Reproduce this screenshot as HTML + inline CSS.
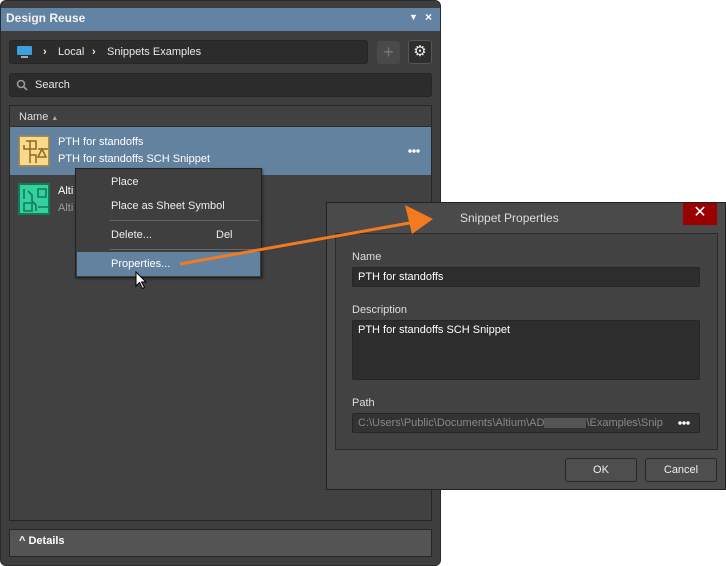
<!DOCTYPE html>
<html><head><style>
*{box-sizing:border-box;margin:0;padding:0}
body{width:726px;height:566px;background:#fff;position:relative;overflow:hidden;font-family:"Liberation Sans",sans-serif;font-size:11px;color:#e8e8e8}
.a{position:absolute}
.dots{position:absolute;width:12px;height:4px;background:radial-gradient(circle,#fff 1.5px,transparent 2px) 0 0/4px 4px repeat-x}
</style></head><body>
<div class="a" style="left:0;top:0;width:441px;height:566px;background:#3e3e3e;border-radius:6px;border:1px solid #2a2a2a"></div>
<div class="a" style="left:1px;top:8px;width:439px;height:23px;background:#6283a4"></div>
<div class="a" style="left:6px;top:11px;font-weight:bold;font-size:12px;color:#f2f2f2">Design Reuse</div>
<div class="a" style="left:409px;top:12px;font-size:9px;color:#fff">▼</div>
<div class="a" style="left:425px;top:10px;font-size:12px;font-weight:bold;color:#fff">×</div>
<div class="a" style="left:9px;top:40px;width:359px;height:24px;background:#2c2c2c;border:1px solid #262626;border-radius:3px"></div>
<div class="a" style="left:17px;top:46px;width:15px;height:9px;background:#3aa0e0;border-radius:1px"></div>
<div class="a" style="left:21px;top:56px;width:7px;height:2px;background:#aaa"></div>
<div class="a" style="left:43px;top:46px;font-weight:bold">›</div>
<div class="a" style="left:58px;top:46px">Local</div>
<div class="a" style="left:92px;top:46px;font-weight:bold">›</div>
<div class="a" style="left:107px;top:46px">Snippets Examples</div>
<div class="a" style="left:377px;top:41px;width:23px;height:23px;background:#4a4a4a;border-radius:3px;color:#777;font-size:18px;text-align:center;line-height:22px">+</div>
<div class="a" style="left:408px;top:40px;width:24px;height:24px;background:#2e2e2e;border:1px solid #555;border-radius:3px;color:#eee;font-size:15px;text-align:center;line-height:21px">⚙</div>
<div class="a" style="left:9px;top:73px;width:423px;height:24px;background:#2c2c2c;border:1px solid #262626;border-radius:3px"></div>
<svg class="a" style="left:16px;top:79px" width="12" height="12"><circle cx="5" cy="5" r="3.5" stroke="#999" stroke-width="1.6" fill="none"/><line x1="8" y1="8" x2="11" y2="11" stroke="#999" stroke-width="1.8"/></svg>
<div class="a" style="left:35px;top:79px">Search</div>
<div class="a" style="left:9px;top:105px;width:423px;height:416px;background:#414141;border:1px solid #262626"></div>
<div class="a" style="left:10px;top:126px;width:421px;height:1px;background:#2e2e2e"></div>
<div class="a" style="left:19px;top:111px;color:#ddd">Name <span style="font-size:7px;color:#aaa">▲</span></div>
<div class="a" style="left:10px;top:127px;width:421px;height:48px;background:#62829f"></div>
<svg class="a" style="left:18px;top:135px" width="32" height="32"><rect x="0.5" y="0.5" width="31" height="31" fill="#a88b47"/><rect x="2" y="2" width="28" height="28" fill="#fbd98a"/><path d="M8 6h10v8H6v-4M12 6v22M20 14h10M24 14l-4 8h8z M12 20h6v8" stroke="#8a6a22" stroke-width="1.5" fill="none"/></svg>
<div class="a" style="left:58px;top:136px;color:#fff">PTH for standoffs</div>
<div class="a" style="left:58px;top:153px;color:#fff">PTH for standoffs SCH Snippet</div>
<div class="dots" style="left:408px;top:149px"></div>
<svg class="a" style="left:18px;top:183px" width="32" height="32"><rect width="32" height="32" fill="#147a55"/><rect x="2" y="2" width="28" height="28" fill="#33d19f"/><path d="M6 6v10M10 8l4 4v6l4 4v6M20 6h8v8h-8zM20 24h10M6 20h8v8H6z" stroke="#147a55" stroke-width="1.6" fill="none"/></svg>
<div class="a" style="left:58px;top:185px;color:#fff">Alti</div>
<div class="a" style="left:58px;top:202px;color:#999">Alti</div>
<div class="a" style="left:9px;top:529px;width:423px;height:28px;background:#545454;border:1px solid #262626"></div>
<div class="a" style="left:19px;top:535px;font-weight:bold;color:#fff">^ Details</div>
<div class="a" style="left:75px;top:168px;width:187px;height:110px;background:#3f3f3f;border:1px solid #222;box-shadow:1px 1px 2px rgba(0,0,0,.4)"></div>
<div class="a" style="left:111px;top:176px;color:#eee">Place</div>
<div class="a" style="left:111px;top:200px;color:#eee">Place as Sheet Symbol</div>
<div class="a" style="left:110px;top:220px;width:149px;height:1px;background:#666"></div>
<div class="a" style="left:111px;top:229px;color:#eee">Delete...</div>
<div class="a" style="left:216px;top:229px;color:#eee">Del</div>
<div class="a" style="left:110px;top:249px;width:149px;height:1px;background:#666"></div>
<div class="a" style="left:77px;top:252px;width:183px;height:24px;background:#62829f"></div>
<div class="a" style="left:111px;top:258px;color:#fff">Properties...</div>
<svg class="a" style="left:135px;top:271px" width="14" height="20"><path d="M1 1v14l3.5-3.5 3 6 2-1-3-5.5H11z" fill="#fff" stroke="#000" stroke-width="1"/></svg>
<div class="a" style="left:326px;top:202px;width:400px;height:288px;background:#4a4a4a;border:1px solid #222"></div>
<div class="a" style="left:460px;top:211px;color:#ddd;font-size:12px">Snippet Properties</div>
<div class="a" style="left:683px;top:203px;width:34px;height:22px;background:#990000;color:#fff;text-align:center;font-size:16px;line-height:20px">✕</div>
<div class="a" style="left:335px;top:233px;width:383px;height:217px;background:#424242;border:1px solid #2b2b2b"></div>
<div class="a" style="left:352px;top:251px;color:#ddd">Name</div>
<div class="a" style="left:352px;top:267px;width:348px;height:20px;background:#2d2d2d;border:1px solid #262626;border-radius:2px;padding:3px 5px;color:#fff">PTH for standoffs</div>
<div class="a" style="left:352px;top:304px;color:#ddd">Description</div>
<div class="a" style="left:352px;top:320px;width:348px;height:60px;background:#2d2d2d;border:1px solid #262626;border-radius:2px;padding:3px 5px;color:#fff">PTH for standoffs SCH Snippet</div>
<div class="a" style="left:352px;top:397px;color:#ddd">Path</div>
<div class="a" style="left:352px;top:413px;width:348px;height:20px;background:#333;border:1px solid #262626;border-radius:2px;padding:3px 5px;color:#888;white-space:nowrap">C:\Users\Public\Documents\Altium\AD<span style="display:inline-block;width:42px;height:10px;background:#555;vertical-align:middle"></span>\Examples\Snip</div>
<div class="dots" style="left:678px;top:421px"></div>
<div class="a" style="left:565px;top:458px;width:72px;height:24px;background:#4e4e4e;border:1px solid #262626;border-radius:3px;text-align:center;line-height:22px;color:#eee">OK</div>
<div class="a" style="left:645px;top:458px;width:72px;height:24px;background:#4e4e4e;border:1px solid #262626;border-radius:3px;text-align:center;line-height:22px;color:#eee">Cancel</div>
<svg class="a" style="left:0;top:0" width="726" height="566"><line x1="180" y1="264" x2="415" y2="222" stroke="#f47a20" stroke-width="3"/><path d="M405 205 L433 219 L412 234 Z" fill="#f47a20"/></svg>
</body></html>
